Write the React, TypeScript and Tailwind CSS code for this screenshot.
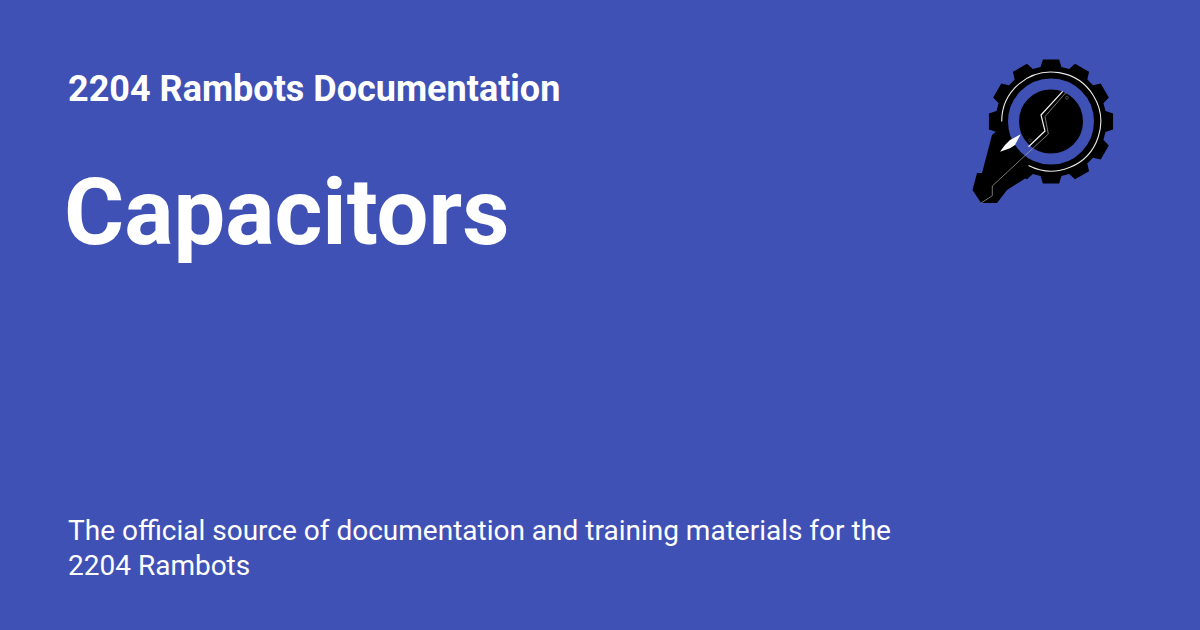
const CX = 91;
const CY = 71.5;

function gearPath() {
  const pts: string[] = [];
  const teeth = 12;
  const rTip = 62.6;
  const rBase = 55.5;
  for (let i = 0; i < teeth; i++) {
    const a = (i * 2 * Math.PI) / teeth - Math.PI / 2;
    const list: [number, number][] = [
      [rBase, -0.19],
      [rTip, -0.13],
      [rTip, 0.13],
      [rBase, 0.19],
    ];
    for (const [r, d] of list) {
      pts.push(`${(CX + r * Math.cos(a + d)).toFixed(2)},${(CY + r * Math.sin(a + d)).toFixed(2)}`);
    }
  }
  return `M${pts.join("L")}Z`;
}

function Logo() {
  return (
    <svg width="165" height="165" viewBox="0 0 165 165" className="block shrink-0">
      <path d={gearPath()} fill="#000" />
      <path
        d="M32 85 L22 123 L17 123 L12.5 140 L21 153 L37 153 L47 140 L66 128 L90 100 L50 70 Z"
        fill="#000"
      />
      <circle cx={CX} cy={CY} r="37.5" fill="none" stroke="#3f51b5" strokeWidth="11" />
      <path
        d="M41.7 71.5 A49.5 49.5 0 1 1 68.5 115.5"
        fill="none"
        stroke="#e8e8e8"
        strokeWidth="1.1"
      />
      <path d="M60.7 84.3 L50 90 L45 95 L40 101.7 L50 98.3 L55 95 Z" fill="#fff" />
      <path d="M102.7 41.3 L81 65 L85 81 L68.5 96.7" fill="none" stroke="#f2f2f2" strokeWidth="1.2" />
      <path
        d="M106 42.5 L85 66.5 L88.3 84 L32.3 136 L32.3 145.7 L20.7 153.3"
        fill="none"
        stroke="#a8a8a8"
        strokeWidth="0.7"
      />
      <circle cx="107" cy="47.7" r="1.4" fill="none" stroke="#888" strokeWidth="0.5" />
      <circle cx="70" cy="90.3" r="1.4" fill="none" stroke="#666" strokeWidth="0.5" />
    </svg>
  );
}

export default function App() {
  return (
    <div className="w-[1200px] h-[630px] overflow-hidden bg-[#3f51b5] text-white font-['Roboto',sans-serif] flex flex-col pl-[68px] pr-[75px] pt-[50px] pb-[47px]">
      <div className="flex justify-between items-start">
        <div className="min-w-0">
          <div className="text-[36px] leading-[46px] font-bold h-[46px] mt-[16px]">2204 Rambots Documentation</div>
          <div className="text-[92px] leading-[110px] font-bold mt-[46px] -ml-[4px]">Capacitors</div>
        </div>
        <Logo />
      </div>
      <div className="mt-auto text-[28px] leading-[35px] w-[860px]">
        The official source of documentation and training materials for the 2204 Rambots
      </div>
    </div>
  );
}
